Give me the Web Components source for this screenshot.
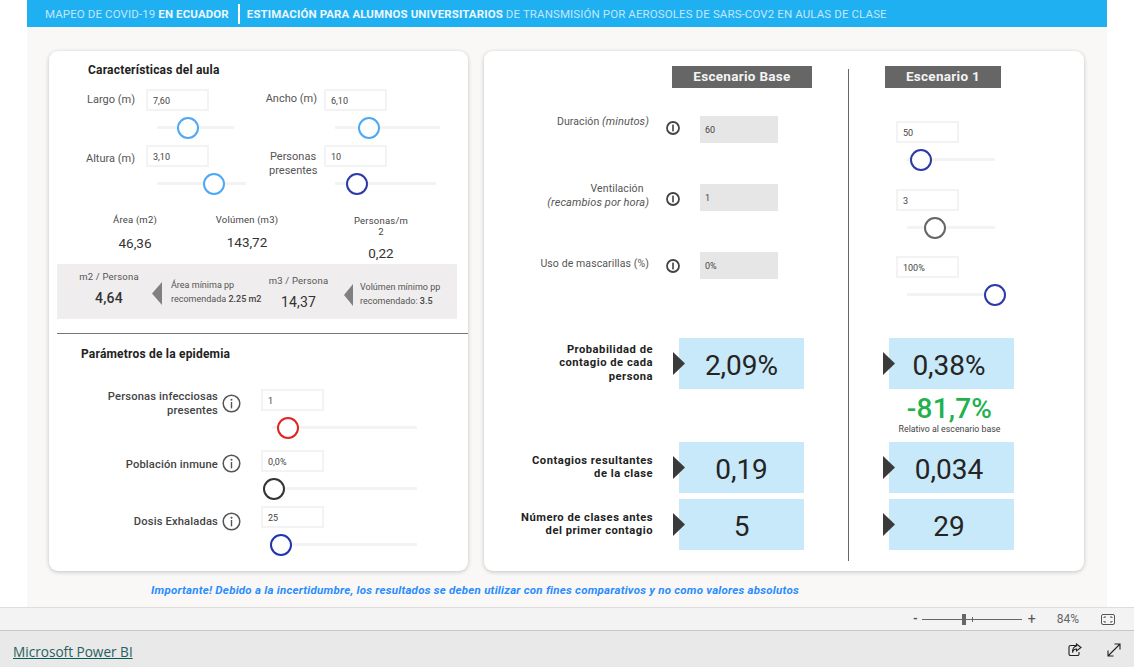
<!DOCTYPE html>
<html lang="es">
<head>
<meta charset="utf-8">
<title>Mapeo de COVID-19 en Ecuador</title>
<style>
  html, body { margin: 0; padding: 0; background: #fff; font-family: Roboto, sans-serif; }
</style>
</head>
<body>
<covid-report></covid-report>

<script>
// Helper: shadow abierto con estilos y markup
function render(el, css, html) {
  if (!el.shadowRoot) el.attachShadow({ mode: 'open' });
  el.shadowRoot.innerHTML = `<style>${css}</style>${html}`;
}

const INFO_BIG = `<svg width="19" height="19" viewBox="0 0 19 19"><circle cx="9.5" cy="9.5" r="8.3" fill="none" stroke="#555" stroke-width="1.5"/><circle cx="9.5" cy="5.8" r="1" fill="#555"/><rect x="8.8" y="8" width="1.4" height="6.4" fill="#555"/></svg>`;
const INFO_SMALL = `<svg width="16" height="16" viewBox="0 0 16 16"><circle cx="8" cy="8" r="6" fill="none" stroke="#444" stroke-width="1.8"/><rect x="7.2" y="4.6" width="1.6" height="6.8" fill="#444"/></svg>`;

// Slicer: caja de valor + barra con el pulgar
class BiSlicer extends HTMLElement {
  connectedCallback() {
    const track = this.getAttribute('track') || 100;
    const pos = this.getAttribute('pos') || 0;
    const color = this.getAttribute('color') || '#2b3aa8';
    render(this, `
      :host { display: block; height: 50px; }
      .box {
        width: 63px; height: 22px; box-sizing: border-box;
        border: 2px solid #f3f3f3; background: #fff;
        font-size: 9px; line-height: 21px; color: #444; padding-left: 5px;
      }
      .rail { position: relative; margin: 6px 0 0 11px; height: 22px; width: ${track}px; }
      .rail::before {
        content: ''; position: absolute; left: 0; right: 0; top: 9px; height: 3px; background: #f3f3f3;
      }
      .thumb {
        position: absolute; top: 0; left: ${pos - 11}px; width: 22px; height: 22px;
        box-sizing: border-box; border: 2px solid ${color}; border-radius: 50%; background: #fff;
      }
    `, `
      <div class="box">${this.getAttribute('value')}</div>
      <div class="rail"><div class="thumb"></div></div>
    `);
  }
}

// Dato calculado del aula
class RoomStat extends HTMLElement {
  connectedCallback() {
    const gap = this.getAttribute('gap') || 10;
    render(this, `
      :host { display: block; text-align: center; color: #444; }
      .label { font-size: 9.5px; line-height: 11px; letter-spacing: .2px; padding-top: ${this.getAttribute('top') || 1}px; }
      .value { font-size: 13.5px; line-height: 16px; color: #333; margin-top: ${gap}px; }
    `, `
      <div class="label"><slot></slot></div>
      <div class="value">${this.getAttribute('value')}</div>
    `);
  }
}

// Triangulo gris / oscuro
class BiArrow extends HTMLElement {
  connectedCallback() {
    const dir = this.getAttribute('dir') || 'left';
    const color = this.getAttribute('color') || '#808080';
    const w = +(this.getAttribute('w') || 10), h = +(this.getAttribute('h') || 23);
    const pts = dir === 'left' ? `${w},0 ${w},${h} 0,${h / 2}` : `0,0 ${w},${h / 2} 0,${h}`;
    render(this, `:host { display: block; width: ${w}px; height: ${h}px; } svg { display: block; }`,
      `<svg width="${w}" height="${h}"><polygon points="${pts}" fill="${color}"/></svg>`);
  }
}

// Caja de resultado con flecha superpuesta
class KpiBox extends HTMLElement {
  connectedCallback() {
    const shift = this.getAttribute('shift') || 0;
    render(this, `
      :host {
        display: flex; position: relative; width: 125px; height: 51px;
        align-items: center; justify-content: center; background: #c8e9fa;
      }
      span { font-size: 28px; line-height: 32px; color: #252423; padding: 5px ${shift}px 0 0; }
      bi-arrow { position: absolute; left: -6px; top: 14px; }
    `, `<bi-arrow dir="right" color="#3a3a3a" w="12" h="23"></bi-arrow><span>${this.getAttribute('value')}</span>`);
  }
}

class TitleBar extends HTMLElement {
  connectedCallback() {
    render(this, `
      :host {
        display: flex; align-items: center; height: 27px; background: #1fb0f2;
        padding-left: 18px; font-size: 11.5px; letter-spacing: .11px; white-space: nowrap;
        color: rgba(255,255,255,.72);
      }
      b { font-weight: 700; color: #eaf7fe; }
      i { display: block; width: 2px; height: 20px; background: #fff; margin: 0 7px 0 9px; }
    `, `
      <span>MAPEO DE COVID-19 <b>EN ECUADOR</b></span><i></i>
      <span><b>ESTIMACIÓN PARA ALUMNOS UNIVERSITARIOS</b> DE TRANSMISIÓN POR AEROSOLES DE SARS-COV2 EN AULAS DE CLASE</span>
    `);
  }
}

class RoomCard extends HTMLElement {
  connectedCallback() {
    render(this, `
      :host {
        display: block; width: 419px; height: 520px; box-sizing: border-box; padding-top: 12px;
        background: #fff; border-radius: 9px; box-shadow: 0 1px 4px rgba(0,0,0,.22); color: #555;
      }
      h2 { margin: 0; font-size: 12px; line-height: 14px; font-weight: 700; color: #222; letter-spacing: .2px; }
      .t1 { padding-left: 39px; }
      .t2 { padding-left: 32px; margin-top: 13px; }
      .dims {
        display: grid; grid-template-columns: 71px 111px 67px 1fr; grid-auto-rows: 50px; row-gap: 6px;
        margin: 12px 0 0 26px;
      }
      .lab { font-size: 11px; line-height: 14px; text-align: right; padding-right: 11px; }
      .lab.b { padding-right: 7px; }
      .stats { display: grid; grid-template-columns: 112px 112px 156px; height: 51px; margin: 18px 0 0 30px; }
      .band {
        display: grid; grid-template-columns: 95px 10px 91px 91px 9px 1fr; height: 55px;
        margin: 0 11px 0 8px; background: #efeded; color: #555;
      }
      .metric { text-align: center; font-size: 9.5px; line-height: 12px; letter-spacing: .2px; }
      .metric b { display: block; font-weight: 500; font-size: 14px; line-height: 16px; color: #333; margin-top: 7px; }
      .metric b.reg { font-weight: 400; }
      .note { font-size: 9px; line-height: 14px; white-space: nowrap; }
      .note b { font-weight: 500; color: #444; }
      hr { border: 0; height: 1px; background: #777; margin: 14px 0 0 8px; }
      .params {
        display: grid; grid-template-columns: 169px 19px 1fr; column-gap: 0;
        margin: 28px 0 0 0;
      }
      .plab { font-size: 11.2px; line-height: 14px; font-weight: 500; color: #444; text-align: right; letter-spacing: .15px; }
      .pico { margin-left: 4px; }
      .pval { margin-left: 24px; }
      .r2 { margin-top: 11px; } .r3 { margin-top: 6px; }
    `, `
      <h2 class="t1">Características del aula</h2>
      <div class="dims">
        <div class="lab" style="padding-top:4px">Largo (m)</div>
        <bi-slicer value="7,60" track="77" pos="31" color="#4ea8f5"></bi-slicer>
        <div class="lab b" style="padding-top:3px">Ancho (m)</div>
        <bi-slicer value="6,10" track="105" pos="34" color="#4ea8f5"></bi-slicer>
        <div class="lab" style="padding-top:7px">Altura (m)</div>
        <bi-slicer value="3,10" track="89" pos="57" color="#4ea8f5"></bi-slicer>
        <div class="lab b" style="text-align:center;padding-left:12px;padding-top:5px">Personas presentes</div>
        <bi-slicer value="10" track="101" pos="22" color="#2b3aa8"></bi-slicer>
      </div>
      <div class="stats">
        <room-stat value="46,36" top="1">Área (m2)</room-stat>
        <room-stat value="143,72" top="1" gap="9">Volúmen (m3)</room-stat>
        <room-stat value="0,22" top="2" gap="8">Personas/m<br>2</room-stat>
      </div>
      <div class="band">
        <div class="metric" style="padding:7px 0 0 9px">m2 / Persona<b>4,64</b></div>
        <bi-arrow style="margin-top:18px"></bi-arrow>
        <div class="note" style="padding:14px 0 0 9px">Área mínima pp<br>recomendada <b>2.25 m2</b></div>
        <div class="metric" style="padding-top:11px">m3 / Persona<b class="reg">14,37</b></div>
        <bi-arrow w="9" h="22" style="margin-top:20px"></bi-arrow>
        <div class="note" style="padding:16px 0 0 7px">Volúmen mínimo pp<br>recomendado: <b>3.5</b></div>
      </div>
      <hr>
      <h2 class="t2">Parámetros de la epidemia</h2>
      <div class="params">
        <div class="plab" style="padding-top:1px">Personas infecciosas<br>presentes</div>
        <div class="pico" style="padding-top:5px">${INFO_BIG}</div>
        <bi-slicer class="pval" value="1" track="145" pos="16" color="#e02424"></bi-slicer>
        <div class="plab r2" style="padding-top:8px">Población inmune</div>
        <div class="pico r2" style="padding-top:4px">${INFO_BIG}</div>
        <bi-slicer class="pval r2" value="0,0%" track="145" pos="2" color="#333"></bi-slicer>
        <div class="plab r3" style="padding-top:9px">Dosis Exhaladas</div>
        <div class="pico r3" style="padding-top:6px">${INFO_BIG}</div>
        <bi-slicer class="pval r3" value="25" track="145" pos="9" color="#2233b0"></bi-slicer>
      </div>
    `);
  }
}

class ScenarioCard extends HTMLElement {
  connectedCallback() {
    render(this, `
      :host {
        display: grid; grid-template-columns: 364px 1px 1fr; width: 600px; height: 520px;
        background: #fff; border-radius: 9px; box-shadow: 0 1px 4px rgba(0,0,0,.22); color: #555;
      }
      .head {
        height: 22px; line-height: 20px; text-align: center; background: #666; color: #f4f4f4;
        font-size: 13.5px; font-weight: 700; letter-spacing: .3px;
      }
      .base { padding-top: 15px; }
      .base .head { width: 140px; margin-left: 188px; }
      .rows { display: grid; grid-auto-rows: 27px; row-gap: 41px; margin-top: 28px; }
      .row { display: grid; grid-template-columns: 165px 16px 78px; }
      .row .lab { font-size: 10.5px; line-height: 14px; text-align: right; letter-spacing: .1px; }
      .row em { font-size: 11px; }
      .row svg { display: block; margin-left: 16px; }
      .row .ro {
        grid-column: 3; width: 78px; height: 27px; margin-left: 35px; background: #e6e6e6;
        font-size: 9px; line-height: 28px; color: #444; padding-left: 5px; box-sizing: border-box;
      }
      .kpis { margin-top: 59px; }
      .kpi { display: grid; grid-template-columns: 169px 1fr; column-gap: 26px; }
      .kpi .lab {
        font-size: 11.2px; line-height: 13.4px; letter-spacing: .5px; font-weight: 700;
        text-align: right; color: #222; align-self: center; margin-top: -1px;
      }
      .vr { background: #666; margin: 18px 0 10px; }
      .alt { padding-top: 15px; }
      .alt .head { width: 116px; margin-left: 36px; }
      .slicers { display: grid; margin: 33px 0 0 47px; }
      .altk { margin: 32px 0 0 40px; }
      .delta { height: 53px; text-align: center; width: 125px; margin-left: -2px; }
      .delta b {
        display: block; font-weight: 500; font-size: 28px; line-height: 30px; padding-top: 5px; color: #22b14c; letter-spacing: .2px;
      }
      .delta span { display: block; font-size: 8.8px; line-height: 10px; color: #444; }
      .mt57 { margin-top: 53px; } .mt6 { margin-top: 6px; }
    `, `
      <div class="base">
        <div class="head">Escenario Base</div>
        <div class="rows">
          <div class="row"><div class="lab" style="margin-top:-1px">Duración <em>(minutos)</em></div>
            <div style="padding-top:4px">${INFO_SMALL}</div><div class="ro">60</div></div>
          <div class="row"><div class="lab" style="margin-top:-2px">Ventilación&nbsp;&nbsp;<br><em>(recambios por hora)</em></div>
            <div style="padding-top:7px">${INFO_SMALL}</div><div class="ro">1</div></div>
          <div class="row"><div class="lab" style="margin-top:5px">Uso de mascarillas (%)</div>
            <div style="padding-top:6px">${INFO_SMALL}</div><div class="ro">0%</div></div>
        </div>
        <div class="kpis">
          <div class="kpi"><div class="lab">Probabilidad de<br>contagio de cada<br>persona</div><kpi-box value="2,09%"></kpi-box></div>
          <div class="kpi mt57"><div class="lab">Contagios resultantes<br>de la clase</div><kpi-box value="0,19"></kpi-box></div>
          <div class="kpi mt6"><div class="lab">Número de clases antes<br>del primer contagio</div><kpi-box value="5"></kpi-box></div>
        </div>
      </div>
      <div class="vr"></div>
      <div class="alt">
        <div class="head">Escenario 1</div>
        <div class="slicers">
          <bi-slicer value="50" track="88" pos="14" color="#2b3aa8"></bi-slicer>
          <bi-slicer value="3" track="88" pos="28" color="#666" style="margin-top:18px"></bi-slicer>
          <bi-slicer value="100%" track="88" pos="88" color="#2b3aa8" style="margin-top:17px"></bi-slicer>
        </div>
        <div class="altk">
          <kpi-box value="0,38%" shift="5"></kpi-box>
          <div class="delta"><b>-81,7%</b><span>Relativo al escenario base</span></div>
          <kpi-box value="0,034" shift="5"></kpi-box>
          <kpi-box class="mt6" value="29" shift="5"></kpi-box>
        </div>
      </div>
    `);
  }
}

class ZoomBar extends HTMLElement {
  connectedCallback() {
    render(this, `
      :host {
        display: flex; align-items: center; justify-content: flex-end; height: 24px; box-sizing: border-box;
        background: #f3f3f3; border-top: 1px solid #ddd; border-bottom: 1px solid #c8c8c8;
        font-size: 12px; color: #666; padding-right: 19px;
      }
      .minus { font-weight: 700; margin-right: 4px; color: #555; }
      .line { position: relative; width: 100px; height: 1px; background: #666; }
      .line b { position: absolute; left: 40px; top: -5px; width: 4px; height: 11px; background: #666; }
      .line i { position: absolute; left: 50px; top: -2px; width: 1px; height: 5px; background: #666; }
      .plus { margin-left: 6px; font-size: 14px; line-height: 14px; color: #555; }
      .pct { margin: 0 22px 0 21px; }
      svg { display: block; }
    `, `
      <span class="minus">-</span>
      <div class="line"><b></b><i></i></div>
      <span class="plus">+</span>
      <span class="pct">84%</span>
      <svg width="14" height="11" viewBox="0 0 14 11" fill="none" stroke="#555"><rect x=".5" y=".5" width="13" height="10" rx="1.5"/><path d="M3 4V3h2M9 3h2v1M11 7v1H9M5 8H3V7"/></svg>
    `);
  }
}

class BiFooter extends HTMLElement {
  connectedCallback() {
    render(this, `
      :host { display: flex; align-items: center; height: 37px; background: #e9e9e9; padding: 0 13px; }
      a { font-family: "Open Sans", sans-serif; font-size: 13.6px; margin-top: 3px; color: #2b5f5f; text-decoration: underline; text-decoration-color: #005c55; }
      .share { margin-left: auto; }
      .grow { margin-left: 25px; }
      svg { display: block; fill: none; stroke: #222; stroke-width: 1.1; }
    `, `
      <a>Microsoft Power BI</a>
      <svg class="share" width="14" height="14" viewBox="0 0 14 14"><path d="M8 2.500H2.500a1.500 1.500 0 0 0-1.500 1.500v7a1.500 1.500 0 0 0 1.500 1.500h7a1.500 1.500 0 0 0 1.500-1.500V9"/><path d="M8.500 1l4.500 3.500L8.500 8V6C6 6 5 7.500 4.500 9.500 4.500 6 6 3.500 8.500 3z"/></svg>
      <svg class="grow" width="14" height="14" viewBox="0 0 14 14"><path d="M1 13L13 1M7.500 1H13v5.500M1 7.500V13h5.500"/></svg>
    `);
  }
}

class CovidReport extends HTMLElement {
  connectedCallback() {
    render(this, `
      :host { display: block; width: 1134px; height: 667px; overflow: hidden; font-family: Roboto, sans-serif; }
      .canvas { width: 1080px; height: 607px; margin-left: 27px; background: #f9f8f7; }
      .cards { display: flex; gap: 16px; padding: 24px 0 0 22px; }
      .warn {
        font-size: 11.5px; line-height: 14px; font-weight: 700; font-style: italic; color: #2a8cff;
        padding: 12px 0 0 124px; letter-spacing: .24px; white-space: nowrap;
      }
    `, `
      <div class="canvas">
        <title-bar></title-bar>
        <div class="cards"><room-card></room-card><scenario-card></scenario-card></div>
        <div class="warn">Importante! Debido a la incertidumbre, los resultados se deben utilizar con fines comparativos y no como valores absolutos</div>
      </div>
      <zoom-bar></zoom-bar>
      <bi-footer></bi-footer>
    `);
  }
}

customElements.define('bi-slicer', BiSlicer);
customElements.define('room-stat', RoomStat);
customElements.define('bi-arrow', BiArrow);
customElements.define('kpi-box', KpiBox);
customElements.define('title-bar', TitleBar);
customElements.define('room-card', RoomCard);
customElements.define('scenario-card', ScenarioCard);
customElements.define('zoom-bar', ZoomBar);
customElements.define('bi-footer', BiFooter);
customElements.define('covid-report', CovidReport);
</script>
</body>
</html>
